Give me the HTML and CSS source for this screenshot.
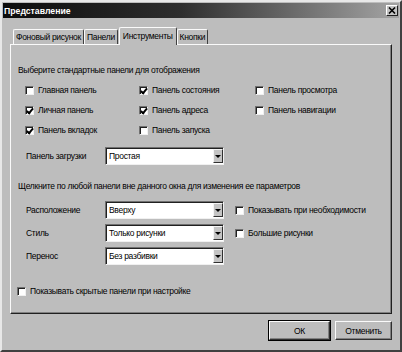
FILE: index.html
```html
<!DOCTYPE html>
<html lang="ru">
<head>
    <meta charset="UTF-8">
    <meta name="viewport" content="width=device-width, initial-scale=1.0">
    <title>Представление</title>
    <link rel="stylesheet" href="styles.css">
</head>
<body>
    <div class="window">
        <div class="titlebar">
            <span class="title">Представление</span>
            <span class="close">
                <svg width="8" height="7" viewBox="0 0 8 7"><path d="M1 0.5 L7 6.5 M7 0.5 L1 6.5" stroke="#000" stroke-width="1.6"/></svg>
            </span>
        </div>

        <div class="content">
            <div class="tabs">
                <div class="tab">Фоновый рисунок</div>
                <div class="tab">Панели</div>
                <div class="tab active">Инструменты</div>
                <div class="tab">Кнопки</div>
            </div>

            <div class="panel">
                <div class="heading">Выберите стандартные панели для отображения</div>
                <div class="checkgrid">
                    <label class="check"><span class="box"></span>Главная панель</label>
                    <label class="check"><span class="box checked"></span>Панель состояния</label>
                    <label class="check"><span class="box"></span>Панель просмотра</label>
                    <label class="check"><span class="box checked"></span>Личная панель</label>
                    <label class="check"><span class="box checked"></span>Панель адреса</label>
                    <label class="check"><span class="box"></span>Панель навигации</label>
                    <label class="check"><span class="box checked"></span>Панель вкладок</label>
                    <label class="check"><span class="box"></span>Панель запуска</label>
                </div>

                <div class="field-row load-row">
                    <span class="field-label">Панель загрузки</span>
                    <div class="select"><span class="value">Простая</span><span class="arrow"></span></div>
                </div>

                <div class="heading second">Щелкните по любой панели вне данного окна для изменения ее параметров</div>

                <div class="fields">
                    <div class="field-row">
                        <span class="field-label">Расположение</span>
                        <div class="select"><span class="value">Вверху</span><span class="arrow"></span></div>
                        <label class="check side"><span class="box"></span>Показывать при необходимости</label>
                    </div>
                    <div class="field-row">
                        <span class="field-label">Стиль</span>
                        <div class="select"><span class="value">Только рисунки</span><span class="arrow"></span></div>
                        <label class="check side"><span class="box"></span>Большие рисунки</label>
                    </div>
                    <div class="field-row">
                        <span class="field-label">Перенос</span>
                        <div class="select"><span class="value">Без разбивки</span><span class="arrow"></span></div>
                    </div>
                </div>

                <label class="check bottom"><span class="box"></span>Показывать скрытые панели при настройке</label>
            </div>

            <div class="buttons">
                <button class="btn btn-default">ОК</button>
                <button class="btn">Отменить</button>
            </div>
        </div>
    </div>
</body>
</html>
```

FILE: styles.css
```css
* {
    box-sizing: border-box;
}
body {
    margin: 0;
    padding: 0;
    font-family: 'Liberation Sans', Arial, sans-serif;
    font-size: 8.5px;
    letter-spacing: -0.3px;
    color: #000;
    background: #bdbdbd;
}
.window {
    width: 402px;
    height: 352px;
    padding: 1px;
    background: #bdbdbd;
    border: 2px solid;
    border-color: #e8e8e8 #404040 #404040 #e8e8e8;
}
.titlebar {
    height: 15px;
    display: flex;
    align-items: center;
    justify-content: space-between;
    padding: 0 1px 0 1px;
    background: linear-gradient(90deg, #0c0c0c 0%, #2e2e2e 45%, #a4a4a4 100%);
}
.title {
    color: #fff;
    font-weight: bold;
    font-size: 8.7px;
    letter-spacing: 0;
}
.close {
    width: 12px;
    height: 11px;
    display: flex;
    align-items: center;
    justify-content: center;
    background: #c4c4c4;
    border: 1px solid;
    border-color: #fff #202020 #202020 #fff;
}
.content {
    padding: 0 7px;
}
.tabs {
    display: flex;
    align-items: flex-end;
    height: 17px;
    margin-top: 9px;
    padding-left: 3px;
}
.tab {
    height: 15px;
    line-height: 14px;
    padding: 0 2px;
    border: 1px solid;
    border-color: #fafafa #404040 transparent #fafafa;
    border-bottom: none;
    border-radius: 2px 2px 0 0;
    white-space: nowrap;
}
.tab.active {
    height: 18px;
    line-height: 16px;
    margin: 0 0 -1px 1px;
    padding: 0 3px;
    background: #bdbdbd;
    position: relative;
    z-index: 1;
}
.panel {
    height: 270px;
    border: 1px solid;
    border-color: #fafafa #202020 #202020 #fafafa;
    box-shadow: inset -1px -1px 0 #808080;
}
.heading {
    margin: 18px 0 0 7px;
    line-height: 14px;
    white-space: nowrap;
}
.heading.second {
    margin-top: 14px;
}
.checkgrid {
    display: grid;
    grid-template-columns: 114px 116px auto;
    grid-auto-rows: 20px;
    margin: 3px 0 0 14px;
}
.check {
    display: flex;
    align-items: center;
    gap: 4px;
    white-space: nowrap;
}
.box {
    width: 9px;
    height: 9px;
    flex: none;
    background: #fff;
    border: 1px solid;
    border-color: #707070 #f0f0f0 #f0f0f0 #707070;
    box-shadow: inset 1px 1px 0 #202020;
    position: relative;
}
.box.checked::after {
    content: "";
    position: absolute;
    left: 2px;
    top: 0px;
    width: 2px;
    height: 5px;
    border: solid #000;
    border-width: 0 2px 2px 0;
    transform: rotate(40deg);
}
.field-row {
    display: flex;
    align-items: center;
    height: 18px;
}
.load-row {
    margin-top: 7px;
}
.field-label {
    width: 79px;
    margin-left: 15px;
    flex: none;
}
.select {
    width: 119px;
    height: 18px;
    flex: none;
    display: flex;
    background: #fff;
    border: 1px solid;
    border-color: #707070 #f0f0f0 #f0f0f0 #707070;
    box-shadow: inset 1px 1px 0 #202020;
}
.select .value {
    flex: 1;
    padding: 0 0 0 3px;
    line-height: 15px;
    margin-top: 1px;
}
.select .arrow {
    width: 10px;
    margin: 1px 0 1px 0;
    background: #c4c4c4;
    border: 1px solid;
    border-color: #f4f4f4 #303030 #303030 #f4f4f4;
    display: flex;
    align-items: center;
    justify-content: center;
}
.select .arrow::after {
    content: "";
    border-left: 3px solid transparent;
    border-right: 3px solid transparent;
    border-top: 3px solid #000;
}
.fields {
    display: flex;
    flex-direction: column;
    gap: 5px;
    margin-top: 8px;
}
.check.side {
    margin-left: 11px;
}
.check.bottom {
    height: 20px;
    margin: 16px 0 0 6px;
}
.buttons {
    display: flex;
    justify-content: flex-end;
    gap: 5px;
    margin-top: 7px;
}
.btn {
    height: 19px;
    padding: 0;
    font-family: inherit;
    font-size: 8.5px;
    letter-spacing: -0.3px;
    background: #bdbdbd;
    border: 1px solid;
    border-color: #fafafa #303030 #303030 #fafafa;
    box-shadow: inset -1px -1px 0 #808080;
}
.btn-default {
    width: 61px;
    outline: 1px solid #000;
}
.btn + .btn {
    width: 57px;
}
```
